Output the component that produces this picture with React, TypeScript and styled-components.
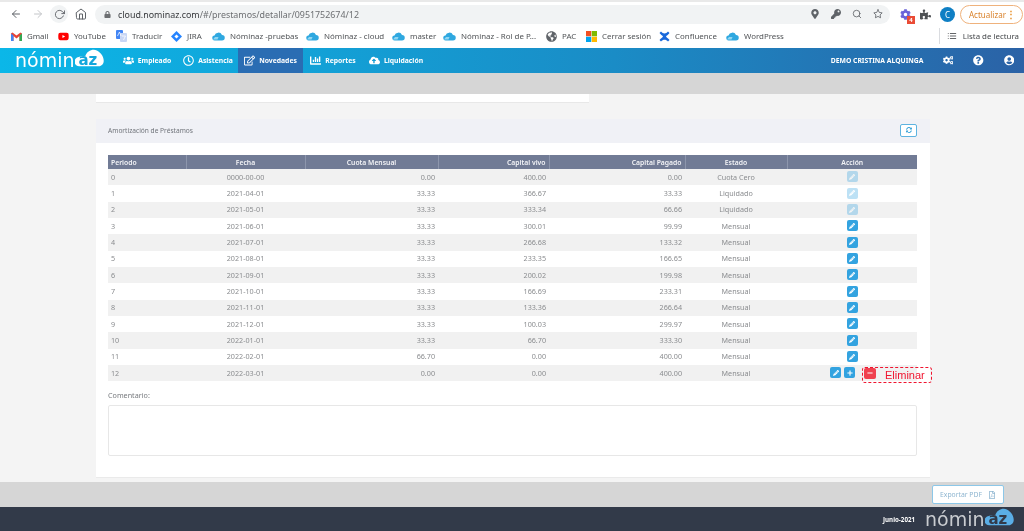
import { createGlobalStyle } from 'styled-components';
import styled from 'styled-components';
import { ReactNode } from 'react';
import {
  FiArrowLeft,
  FiArrowRight,
  FiHome,
  FiRotateCw,
  FiStar,
  FiSearch,
  FiList,
} from 'react-icons/fi';
import {
  FaLock,
  FaMapMarkerAlt,
  FaKey,
  FaPuzzlePiece,
  FaYoutube,
  FaGlobeAmericas,
  FaUsers,
  FaRegClock,
  FaRegEdit,
  FaChartBar,
  FaCloudUploadAlt,
  FaCogs,
  FaQuestionCircle,
  FaUserCircle,
  FaPencilAlt,
  FaPlus,
  FaMinus,
  FaSyncAlt,
  FaRegFilePdf,
  FaCog,
} from 'react-icons/fa';

const GlobalStyle = createGlobalStyle`
  html, body {
    margin: 0;
    padding: 0;
    width: 1024px;
    height: 531px;
    overflow: hidden;
    background: #f4f4f4;
    font-family: "Noto Sans", "Liberation Sans", sans-serif;
  }
  * { box-sizing: border-box; }
`;

const Page = styled.div`
  display: flex;
  flex-direction: column;
  width: 1024px;
  height: 531px;
  will-change: transform;
`;

/* browser chrome */
const Toolbar = styled.div`
  display: flex;
  align-items: center;
  height: 24px;
  padding: 2px 0 0 10px;
  background: #fff;
  border-top: 2px solid #e9e9e9;
  color: #5f6368;
`;

const NavIcons = styled.div`
  display: flex;
  align-items: center;
  gap: 9.5px;
  width: 85px;
  font-size: 12px;
`;

const ReloadIcon = styled.span`
  display: flex;
  align-items: center;
  justify-content: center;
  width: 18px;
  height: 18px;
  margin: 0 -3px;
  border-radius: 50%;
  background: #f1f3f4;
`;

const UrlBar = styled.div`
  display: flex;
  align-items: center;
  gap: 7px;
  width: 795px;
  height: 19px;
  padding: 0 7px 0 9px;
  background: #f1f3f4;
  border-radius: 10px;
  font-size: 8.9px;
  color: #6d6f72;
`;

const Host = styled.span`
  color: #36383b;
`;

const UrlText = styled.span`
  flex: 1;
`;

const UrlIcons = styled.div`
  display: flex;
  align-items: center;
  gap: 11px;
  font-size: 10px;
  color: #5f6368;
`;

const ExtArea = styled.div`
  display: flex;
  align-items: center;
  margin-left: 10px;
  gap: 9px;
  font-size: 11px;
  color: #4f5255;
`;

const ExtBadgeWrap = styled.span`
  position: relative;
  display: flex;
  color: #6a62d8;
  font-size: 11px;
`;

const ExtBadge = styled.span`
  position: absolute;
  right: -4px;
  bottom: -4px;
  width: 8px;
  height: 8px;
  background: #ea4b35;
  color: #fff;
  font-size: 6px;
  line-height: 8px;
  font-weight: 700;
  text-align: center;
`;

const Avatar = styled.span`
  width: 15px;
  height: 15px;
  border-radius: 50%;
  background: #0f7fc4;
  color: #fff;
  font-size: 8px;
  line-height: 15px;
  text-align: center;
`;

const UpdateButton = styled.span`
  display: flex;
  align-items: center;
  justify-content: space-between;
  width: 63px;
  height: 19px;
  margin-left: -4px;
  padding: 0 6px 0 8px;
  border: 1px solid #efb27c;
  border-radius: 10px;
  color: #d9822b;
  font-size: 8px;
`;

const Dots = styled.b`
  font-size: 10px;
  color: #e8932f;
`;

const Bookmarks = styled.div`
  display: flex;
  align-items: center;
  height: 24px;
  padding-left: 11px;
  background: #fff;
  font-size: 7.9px;
  color: #505356;
`;

const Bookmark = styled.div<{ $w: number }>`
  display: flex;
  align-items: center;
  gap: 5px;
  width: ${(p) => p.$w}px;
  white-space: nowrap;
`;

const ReadingList = styled.div`
  display: flex;
  align-items: center;
  gap: 6px;
  margin-left: auto;
  padding: 0 5px 0 7px;
  height: 16px;
  border-left: 1px solid #dadce0;
  color: #44474a;
`;

const BmGlyph = styled.span<{ $c?: string }>`
  display: flex;
  align-items: center;
  justify-content: center;
  width: 11px;
  height: 11px;
  font-size: 11px;
  color: ${(p) => p.$c || '#5f6368'};
`;

/* app nav */
const NavBar = styled.div`
  display: flex;
  align-items: stretch;
  height: 25px;
  background: linear-gradient(90deg, #0bb7e8 0%, #1a8cc6 60%, #2b62a6 100%);
  color: #fff;
  font-size: 6.8px;
  font-weight: 700;
`;

const LogoBox = styled.div<{ $dark?: boolean }>`
  position: relative;
  display: flex;
  align-items: center;
  width: ${(p) => (p.$dark ? 90 : 116)}px;
  padding-left: ${(p) => (p.$dark ? 0 : 15)}px;
  font-size: 19px;
  font-weight: 400;
  color: ${(p) => (p.$dark ? '#c9ccd0' : '#fff')};
  font-family: "DejaVu Sans", "Noto Sans", sans-serif;
`;

const LogoWord = styled.span`
  position: relative;
  line-height: 1;
  white-space: nowrap;
`;

const LogoAz = styled.span<{ $c: string }>`
  position: relative;
  margin-left: 4px;
  font-size: 15px;
  font-weight: 700;
  vertical-align: 2px;
  color: ${(p) => p.$c};
`;

const LogoCloud = styled.svg`
  position: absolute;
  left: -4px;
  top: -7px;
  width: 30px;
  height: 24px;
`;

const LogoAzText = styled.span`
  position: relative;
`;

const NavItem = styled.div<{ $active?: boolean; $w: number }>`
  display: flex;
  align-items: center;
  justify-content: center;
  gap: 4px;
  width: ${(p) => p.$w}px;
  background: ${(p) => (p.$active ? '#2a6db3' : 'transparent')};
  white-space: nowrap;
`;

const NavIcon = styled.span`
  display: flex;
  font-size: 11px;
`;

const UserArea = styled.div`
  display: flex;
  align-items: center;
  margin-left: auto;
  padding-right: 10px;
`;

const UserIcons = styled.div`
  display: flex;
  align-items: center;
  gap: 20px;
  margin-left: 19px;
  font-size: 10.5px;
`;

const GreyBand = styled.div`
  height: 21px;
  background: #d6d6d6;
`;

/* main */
const Main = styled.main`
  display: flex;
  flex-direction: column;
  height: 388px;
  padding: 0 94px 0 96px;
  background: #f4f4f4;
`;

const TopCard = styled.div`
  width: 493px;
  height: 9px;
  background: #fff;
  border-bottom: 1px solid #e8e8e8;
`;

const Panel = styled.section`
  display: flex;
  flex-direction: column;
  height: 359px;
  margin-top: 16px;
  background: #fff;
  border-bottom: 1px solid #eaeaea;
`;

const PanelHeader = styled.header`
  display: flex;
  align-items: center;
  justify-content: space-between;
  height: 24px;
  padding: 0 13px 2px 12px;
  background: #f0f1f6;
  font-size: 6.6px;
  color: #70747a;
`;

const RefreshButton = styled.button`
  display: flex;
  align-items: center;
  justify-content: center;
  width: 17px;
  height: 13px;
  padding: 0;
  background: #fff;
  border: 1px solid #5db3e0;
  border-radius: 2px;
  color: #2f9fd8;
  font-size: 6px;
`;

const PanelBody = styled.div`
  display: flex;
  flex-direction: column;
  padding: 12px 13px 0 12px;
`;

const Table = styled.table`
  width: 809px;
  border-collapse: collapse;
  table-layout: fixed;
  font-size: 7.2px;
  color: #8a8c8f;
`;

const Th = styled.th<{ $align?: string }>`
  height: 14px;
  padding: 0 3px;
  background: #717b95;
  color: #f3f4f7;
  font-size: 6.8px;
  font-weight: 600;
  text-align: ${(p) => p.$align || 'center'};
  border-left: 1px solid #8d96ac;
  &:first-child { border-left: none; }
`;

const Tr = styled.tr`
  height: 16.33px;
  &:nth-child(odd) { background: #f1f1f1; }
`;

const Td = styled.td<{ $align?: string }>`
  position: relative;
  padding: 0 3px 1px;
  text-align: ${(p) => p.$align || 'center'};
`;

const ActionRow = styled.div`
  display: flex;
  align-items: center;
  gap: 3px;
  padding-left: 40px;
`;

const IconButton = styled.span<{ $faded?: boolean; $bg?: string }>`
  display: inline-flex;
  align-items: center;
  justify-content: center;
  width: 11px;
  height: 11px;
  vertical-align: middle;
  border-radius: 2px;
  background: ${(p) => p.$bg || '#33a3e0'};
  opacity: ${(p) => (p.$faded ? 0.32 : 1)};
  color: #fff;
  font-size: 6px;
`;

const Annotation = styled.div`
  position: absolute;
  left: 75px;
  top: 2px;
  display: flex;
  align-items: center;
  width: 70px;
  height: 16px;
  padding-left: 1px;
  border: 1.5px dashed #f0142f;
  border-radius: 3px;
  color: #f0142f;
  font-family: "Liberation Sans", sans-serif;
  font-size: 11px;
`;

const AnnotationIcon = styled(IconButton)`
  width: 12px;
  margin-bottom: 3px;
`;

const AnnotationText = styled.span`
  margin-left: 9px;
`;

const CommentLabel = styled.label`
  margin-top: 9px;
  font-size: 7.2px;
  color: #777a7e;
`;

const CommentBox = styled.div`
  width: 809px;
  height: 51px;
  margin-top: 5px;
  background: #fff;
  border: 1px solid #e7e7e7;
  border-radius: 2px;
`;

const ActionBand = styled.div`
  display: flex;
  align-items: center;
  justify-content: flex-end;
  height: 25px;
  padding-right: 20px;
  background: #d6d6d6;
`;

const ExportButton = styled.button`
  display: flex;
  align-items: center;
  justify-content: center;
  gap: 6px;
  width: 72px;
  height: 19px;
  padding: 0;
  background: #fff;
  border: 1px solid #8cc7e8;
  border-radius: 2px;
  color: #8fb6d1;
  font-family: inherit;
  font-size: 6.8px;
`;

const Footer = styled.footer`
  display: flex;
  align-items: center;
  justify-content: flex-end;
  height: 24px;
  padding-right: 9px;
  background: #323a49;
  color: #fff;
  font-size: 6.2px;
  font-weight: 700;
`;

const FooterDate = styled.span`
  margin-right: 10px;
`;

const cols = [78, 119, 133, 111, 136, 102, 130];

type Row = [string, string, string, string, string, string];

const rows: Row[] = [
  ['0', '0000-00-00', '0.00', '400.00', '0.00', 'Cuota Cero'],
  ['1', '2021-04-01', '33.33', '366.67', '33.33', 'Liquidado'],
  ['2', '2021-05-01', '33.33', '333.34', '66.66', 'Liquidado'],
  ['3', '2021-06-01', '33.33', '300.01', '99.99', 'Mensual'],
  ['4', '2021-07-01', '33.33', '266.68', '133.32', 'Mensual'],
  ['5', '2021-08-01', '33.33', '233.35', '166.65', 'Mensual'],
  ['6', '2021-09-01', '33.33', '200.02', '199.98', 'Mensual'],
  ['7', '2021-10-01', '33.33', '166.69', '233.31', 'Mensual'],
  ['8', '2021-11-01', '33.33', '133.36', '266.64', 'Mensual'],
  ['9', '2021-12-01', '33.33', '100.03', '299.97', 'Mensual'],
  ['10', '2022-01-01', '33.33', '66.70', '333.30', 'Mensual'],
  ['11', '2022-02-01', '66.70', '0.00', '400.00', 'Mensual'],
  ['12', '2022-03-01', '0.00', '0.00', '400.00', 'Mensual'],
];

const CloudIcon = () => (
  <svg width="13" height="9" viewBox="0 0 26 18">
    <path d="M6 17a5 5 0 0 1-1-10 8 8 0 0 1 15-1 5.500 5.500 0 0 1 0 11z" fill="#2fa8e0" />
    <path d="M2 15h9l2-5h-7z" fill="#8fd6f2" />
  </svg>
);

const GmailIcon = () => (
  <svg width="11" height="9" viewBox="0 0 22 18">
    <path d="M0 3v15h5V8l6 5 6-5v10h5V3l-3-2-8 6-8-6z" fill="#ea4335" />
    <path d="M0 3v15h5V7z" fill="#4285f4" />
    <path d="M17 7v11h5V3z" fill="#34a853" />
  </svg>
);

const TranslateIcon = () => (
  <svg width="11" height="12" viewBox="0 0 22 24">
    <rect x="0" y="0" width="14" height="18" rx="2" fill="#4285f4" />
    <rect x="8" y="6" width="14" height="18" rx="2" fill="#c8d6f5" />
    <path d="M3 12l4-8 3 8M12 12h7M15 20l4-8" stroke="#fff" strokeWidth="1.500" fill="none" />
  </svg>
);

const JiraIcon = () => (
  <svg width="11" height="11" viewBox="0 0 22 22">
    <path d="M11 0l11 11-11 11L0 11z" fill="#2684ff" />
    <rect x="8" y="8" width="6" height="6" fill="#fff" transform="rotate(45 11 11)" />
  </svg>
);

const WindowsIcon = () => (
  <svg width="11" height="11" viewBox="0 0 22 22">
    <rect width="10.500" height="10.500" fill="#f25022" />
    <rect x="11.500" width="10.500" height="10.500" fill="#7fba00" />
    <rect y="11.500" width="10.500" height="10.500" fill="#00a4ef" />
    <rect x="11.500" y="11.500" width="10.500" height="10.500" fill="#ffb900" />
  </svg>
);

const ConfluenceIcon = () => (
  <svg width="11" height="11" viewBox="0 0 22 22">
    <path d="M1 4l3-3c4 5 10 5 14 0l3 3c-3 4-6 5-7 7 1 2 4 3 7 7l-3 3c-4-5-10-5-14 0l-3-3c3-4 6-5 7-7-1-2-4-3-7-7z" fill="#1868db" />
  </svg>
);

const Logo = ({ dark }: { dark?: boolean }) => (
  <LogoBox $dark={dark}>
    <LogoWord>
      nómin
      <LogoAz $c={dark ? '#323a49' : '#13a7dc'}>
        <LogoCloud viewBox="0 0 32 24">
          <path
            d="M5 23a5 5 0 0 1-1-10c2-1 4-1 7-1 2-7 11-9 15-4 3 2 6 8 4 12-1 2-3 3-5 3z"
            fill={dark ? '#5aaee6' : '#fff'}
          />
        </LogoCloud>
        <LogoAzText>az</LogoAzText>
      </LogoAz>
    </LogoWord>
  </LogoBox>
);

const bookmarks: { label: string; w: number; icon: ReactNode }[] = [
  { label: 'Gmail', w: 47, icon: <GmailIcon /> },
  { label: 'YouTube', w: 58, icon: <BmGlyph $c="#f00"><FaYoutube /></BmGlyph> },
  { label: 'Traducir', w: 55, icon: <TranslateIcon /> },
  { label: 'JIRA', w: 41, icon: <JiraIcon /> },
  { label: 'Nóminaz -pruebas', w: 94, icon: <CloudIcon /> },
  { label: 'Nóminaz - cloud', w: 86, icon: <CloudIcon /> },
  { label: 'master', w: 51, icon: <CloudIcon /> },
  { label: 'Nóminaz - Rol de P...', w: 103, icon: <CloudIcon /> },
  { label: 'PAC', w: 40, icon: <BmGlyph><FaGlobeAmericas /></BmGlyph> },
  { label: 'Cerrar sesión', w: 73, icon: <WindowsIcon /> },
  { label: 'Confluence', w: 67, icon: <ConfluenceIcon /> },
  { label: 'WordPress', w: 60, icon: <CloudIcon /> },
];

const navItems: { label: string; w: number; icon: ReactNode; active?: boolean }[] = [
  { label: 'Empleado', w: 62, icon: <FaUsers /> },
  { label: 'Asistencia', w: 60, icon: <FaRegClock /> },
  { label: 'Novedades', w: 65, icon: <FaRegEdit />, active: true },
  { label: 'Reportes', w: 60, icon: <FaChartBar /> },
  { label: 'Liquidación', w: 66, icon: <FaCloudUploadAlt /> },
];

export default function App() {
  return (
    <Page>
      <GlobalStyle />
      <Toolbar>
        <NavIcons>
          <FiArrowLeft />
          <FiArrowRight color="#c4c6c9" />
          <ReloadIcon><FiRotateCw size={11} /></ReloadIcon>
          <FiHome />
        </NavIcons>
        <UrlBar>
          <FaLock size={7} />
          <UrlText>
            <Host>cloud.nominaz.com</Host>/#/prestamos/detallar/0951752674/12
          </UrlText>
          <UrlIcons>
            <FaMapMarkerAlt />
            <FaKey />
            <FiSearch />
            <FiStar />
          </UrlIcons>
        </UrlBar>
        <ExtArea>
          <ExtBadgeWrap>
            <FaCog />
            <ExtBadge>4</ExtBadge>
          </ExtBadgeWrap>
          <FaPuzzlePiece />
          <Avatar>C</Avatar>
          <UpdateButton>
            Actualizar
            <Dots>⋮</Dots>
          </UpdateButton>
        </ExtArea>
      </Toolbar>
      <Bookmarks>
        {bookmarks.map((b) => (
          <Bookmark key={b.label} $w={b.w}>
            {b.icon}
            {b.label}
          </Bookmark>
        ))}
        <ReadingList>
          <FiList size={10} />
          Lista de lectura
        </ReadingList>
      </Bookmarks>
      <NavBar>
        <Logo />
        {navItems.map((n) => (
          <NavItem key={n.label} $w={n.w} $active={n.active}>
            <NavIcon>{n.icon}</NavIcon>
            {n.label}
          </NavItem>
        ))}
        <UserArea>
          DEMO CRISTINA ALQUINGA
          <UserIcons>
            <FaCogs />
            <FaQuestionCircle />
            <FaUserCircle />
          </UserIcons>
        </UserArea>
      </NavBar>
      <GreyBand />
      <Main>
        <TopCard />
        <Panel>
          <PanelHeader>
            Amortización de Préstamos
            <RefreshButton><FaSyncAlt /></RefreshButton>
          </PanelHeader>
          <PanelBody>
            <Table>
              <colgroup>
                {cols.map((c, i) => (
                  <col key={i} style={{ width: c }} />
                ))}
              </colgroup>
              <thead>
                <tr>
                  <Th $align="left">Periodo</Th>
                  <Th>Fecha</Th>
                  <Th>Cuota Mensual</Th>
                  <Th $align="right">Capital vivo</Th>
                  <Th $align="right">Capital Pagado</Th>
                  <Th>Estado</Th>
                  <Th>Acción</Th>
                </tr>
              </thead>
              <tbody>
                {rows.map((r, i) => (
                  <Tr key={r[0]}>
                    <Td $align="left">{r[0]}</Td>
                    <Td>{r[1]}</Td>
                    <Td $align="right">{r[2]}</Td>
                    <Td $align="right">{r[3]}</Td>
                    <Td $align="right">{r[4]}</Td>
                    <Td>{r[5]}</Td>
                    <Td>
                      {i < 12 ? (
                        <IconButton $faded={i < 3}><FaPencilAlt /></IconButton>
                      ) : (
                        <>
                          <ActionRow>
                            <IconButton><FaPencilAlt /></IconButton>
                            <IconButton><FaPlus /></IconButton>
                          </ActionRow>
                          <Annotation>
                            <AnnotationIcon $bg="#f0414f"><FaMinus /></AnnotationIcon>
                            <AnnotationText>Eliminar</AnnotationText>
                          </Annotation>
                        </>
                      )}
                    </Td>
                  </Tr>
                ))}
              </tbody>
            </Table>
            <CommentLabel>Comentario:</CommentLabel>
            <CommentBox />
          </PanelBody>
        </Panel>
      </Main>
      <ActionBand>
        <ExportButton>
          Exportar PDF
          <FaRegFilePdf size={8} />
        </ExportButton>
      </ActionBand>
      <Footer>
        <FooterDate>Junio-2021</FooterDate>
        <Logo dark />
      </Footer>
    </Page>
  );
}
